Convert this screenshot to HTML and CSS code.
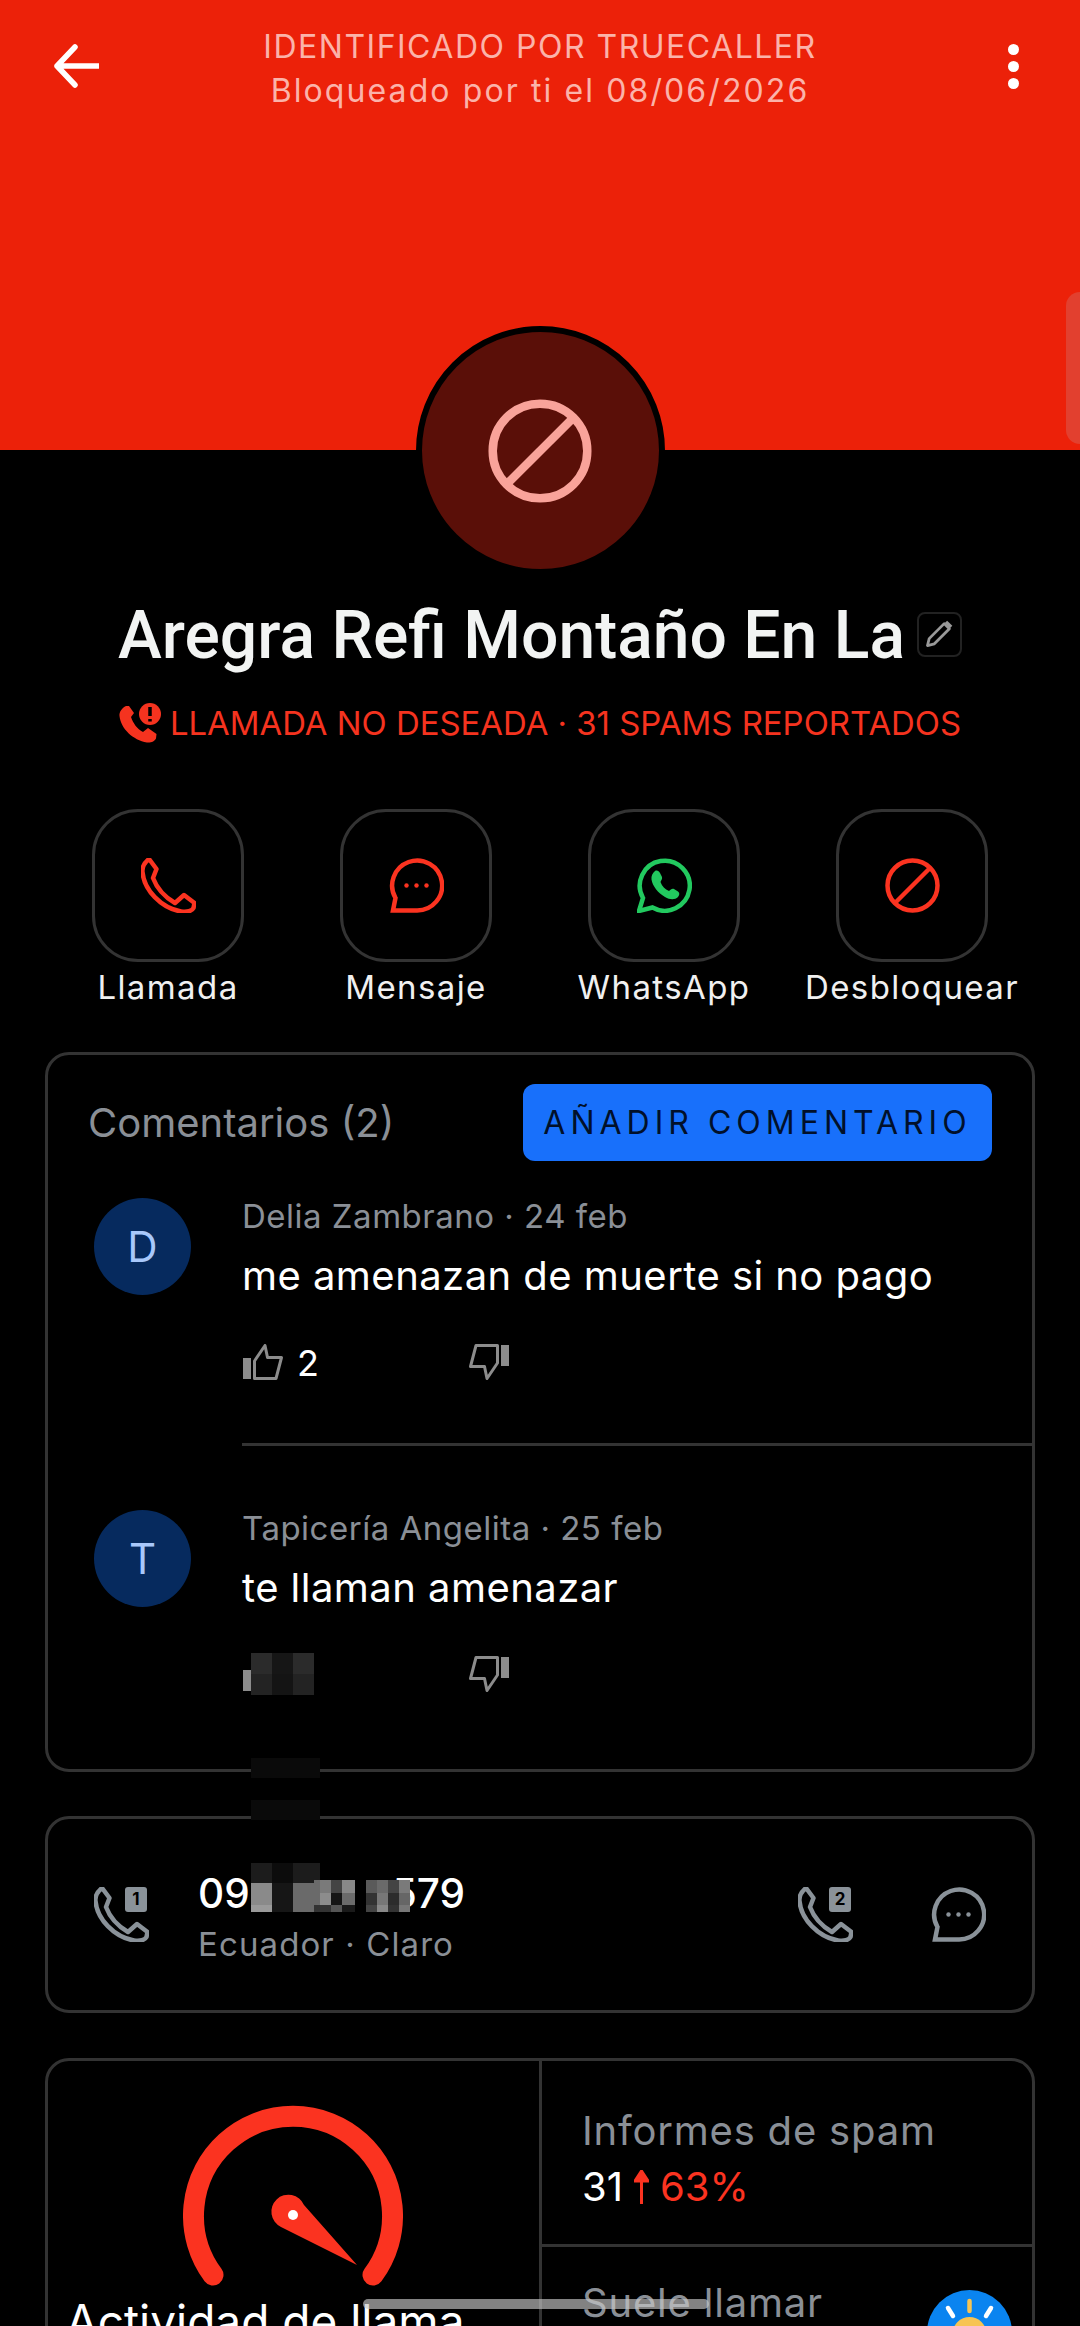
FILE: index.html
```html
<!DOCTYPE html>
<html lang="es">
<head>
  <meta charset="UTF-8" />
  <meta name="viewport" content="width=device-width, initial-scale=1" />
  <title>Truecaller</title>
  <link rel="stylesheet" href="styles.css">
</head>
<body>
  <svg class="defs" width="0" height="0">
    <symbol id="phone" viewBox="0 0 55 55">
      <path d="M8 1C3 5 1 9 1.500 14C3 32 20 50 40 53.500C46 54.500 51 53 52.500 50L53.500 45L43 37L34 45C22 38 15 28 12 20L15.500 11Z" fill="none" stroke="currentColor" stroke-width="4.500" stroke-linejoin="round"/>
    </symbol>
    <symbol id="bubble" viewBox="0 0 55 55">
      <path d="M4 52.500L6.500 40A25 25 0 1 1 28 52.500Z" fill="none" stroke="currentColor" stroke-width="4.500" stroke-linejoin="miter"/>
      <circle cx="17.500" cy="27.500" r="2.200" fill="currentColor"/>
      <circle cx="27.500" cy="27.500" r="2.200" fill="currentColor"/>
      <circle cx="37.500" cy="27.500" r="2.200" fill="currentColor"/>
    </symbol>
    <symbol id="ban" viewBox="0 0 55 55">
      <circle cx="27.500" cy="27.500" r="25" fill="none" stroke="currentColor" stroke-width="4.500"/>
      <path d="M45 10L10 45" stroke="currentColor" stroke-width="4.500"/>
    </symbol>
    <symbol id="thumb" viewBox="0 0 40 36">
      <rect x="0" y="14" width="8" height="21" fill="currentColor"/>
      <path d="M11.500 34.500V17L22 1.500L24.500 13.500H38.500L33 34.500Z" fill="none" stroke="currentColor" stroke-width="3" stroke-linejoin="round"/>
    </symbol>
  </svg>

  <header class="hero">
    <svg class="back" width="46" height="44" viewBox="0 0 46 44"><path d="M22 3L4 22L22 41M4 22H45" fill="none" stroke="#fff" stroke-width="5.500" stroke-linecap="round" stroke-linejoin="round"/></svg>
    <div class="hero-text">
      <div>IDENTIFICADO POR TRUECALLER</div>
      <div>Bloqueado por ti el 08/06/2026</div>
    </div>
    <div class="dots"><span></span><span></span><span></span></div>
    <div class="side-tab"></div>
  </header>

  <div class="avatar">
    <svg width="104" height="104"><use href="#ban"/></svg>
  </div>

  <div class="title-row">
    <h1>Aregra Refi Montaño En La</h1>
    <span class="edit">
      <svg width="30" height="30" viewBox="0 0 26 26"><path d="M3 23L4.500 17L17.500 4L22 8.500L9 21.500Z" fill="none" stroke="#999" stroke-width="2.400" stroke-linejoin="round"/><path d="M19 2.500L23.500 7" stroke="#999" stroke-width="3"/></svg>
    </span>
  </div>

  <div class="spam-row">
    <svg width="42" height="40" viewBox="0 0 42 40">
      <path d="M7 3C3 5 0 9 .5 13C2 26 14 37 28 39.500C32 40 36 38 37 35.500L37.500 31L29 25L24 29C18 26 14 20 12 14L15 10L10 3Z" fill="#f5331f"/>
      <circle cx="31" cy="11" r="11" fill="#f5331f"/>
      <path d="M31 4V13M31 16V18.500" stroke="#000" stroke-width="3.500"/>
    </svg>
    <span>LLAMADA NO DESEADA · 31 SPAMS REPORTADOS</span>
  </div>

  <div class="actions">
    <div class="action">
      <div class="action-box red"><svg width="55" height="55"><use href="#phone"/></svg></div>
      <div class="action-label">Llamada</div>
    </div>
    <div class="action">
      <div class="action-box red"><svg width="55" height="55"><use href="#bubble"/></svg></div>
      <div class="action-label">Mensaje</div>
    </div>
    <div class="action">
      <div class="action-box green">
        <svg width="55" height="55" viewBox="0 0 55 55">
          <path d="M2 53L6 40A25 25 0 1 1 15.500 49.500Z" fill="none" stroke="currentColor" stroke-width="4.500"/>
          <path d="M18 13C20 12 22 13 23 15L25 19C25.500 21 24 22.500 23.500 24C25 28 28 31.500 32 33C33.500 32 35 30 37 31L41 33.500C43 35 42.500 37 41 39C38 42 33 42 28 39C21 35 15.500 28 14.500 21.500C14 18 15.500 15 18 13Z" fill="currentColor"/>
        </svg>
      </div>
      <div class="action-label">WhatsApp</div>
    </div>
    <div class="action">
      <div class="action-box red"><svg width="55" height="55"><use href="#ban"/></svg></div>
      <div class="action-label">Desbloquear</div>
    </div>
  </div>

  <section class="card comments">
    <div class="comments-head">
      <span>Comentarios (2)</span>
      <button class="add-btn">AÑADIR COMENTARIO</button>
    </div>

    <div class="comment">
      <div class="comment-avatar">D</div>
      <div class="comment-body first">
        <div class="meta">Delia Zambrano · 24 feb</div>
        <div class="comment-text">me amenazan de muerte si no pago</div>
        <div class="reactions">
          <span class="like"><svg width="40" height="36"><use href="#thumb"/></svg><b>2</b></span>
          <svg class="dislike" width="40" height="36"><use href="#thumb"/></svg>
        </div>
      </div>
    </div>

    <div class="comment">
      <div class="comment-avatar">T</div>
      <div class="comment-body">
        <div class="meta">Tapicería Angelita · 25 feb</div>
        <div class="comment-text">te llaman amenazar</div>
        <div class="reactions">
          <span class="like"><svg width="40" height="36"><use href="#thumb"/></svg></span>
          <svg class="dislike" width="40" height="36"><use href="#thumb"/></svg>
        </div>
      </div>
    </div>
  </section>

  <section class="card number-card">
    <div class="sim">
      <svg width="55" height="55"><use href="#phone"/></svg>
      <span class="sim-tag">1</span>
    </div>
    <div class="number-info">
      <div class="number"><span>09</span><span class="number-gap"></span><span>579</span></div>
      <div class="meta">Ecuador · Claro</div>
    </div>
    <div class="sim second">
      <svg width="55" height="55"><use href="#phone"/></svg>
      <span class="sim-tag">2</span>
    </div>
    <svg class="sms" width="55" height="55"><use href="#bubble"/></svg>
  </section>

  <section class="card stats">
    <div class="gauge-col">
      <svg class="gauge" width="220" height="190" viewBox="0 0 220 190">
        <path d="M30 170A99.500 99.500 0 1 1 190 170" fill="none" stroke="#fb3320" stroke-width="21" stroke-linecap="round"/>
        <path d="M174 160L98 122A17 17 0 1 1 121 100Z" fill="#fb3320"/>
        <circle cx="110" cy="110" r="5" fill="#fff"/>
      </svg>
      <div class="gauge-label">Actividad de llama</div>
    </div>
    <div class="stats-col">
      <div class="stat">
        <div class="stat-title">Informes de spam</div>
        <div class="stat-value">31<svg width="15" height="34" viewBox="0 0 15 34"><path d="M7.500 34V4M1 11L7.500 1L14 11Z" fill="#fb3320" stroke="#fb3320" stroke-width="3"/></svg><span>63%</span></div>
      </div>
      <div class="stat when">
        <div class="stat-title">Suele llamar</div>
        <svg class="sun" width="85" height="85" viewBox="0 0 85 85">
          <circle cx="42.500" cy="42.500" r="42.500" fill="#0a84f0"/>
          <circle cx="42.500" cy="44" r="17" fill="#f7c453"/>
          <path d="M42.500 11V21" stroke="#f7c453" stroke-width="4.500" stroke-linecap="round"/>
          <path d="M21 18L26 26M64 18L59 26" stroke="#fff" stroke-width="4.500" stroke-linecap="round"/>
        </svg>
      </div>
    </div>
  </section>

  <!-- redaction mosaic from the original capture -->
  <svg class="mosaic" width="1080" height="2326" shape-rendering="crispEdges">
    <rect x="251" y="1653" width="21" height="21" fill="#2b2b2b"/>
    <rect x="272" y="1653" width="21" height="21" fill="#161616"/>
    <rect x="293" y="1653" width="21" height="21" fill="#2b2b2b"/>
    <rect x="251" y="1674" width="21" height="21" fill="#232323"/>
    <rect x="272" y="1674" width="21" height="21" fill="#141414"/>
    <rect x="293" y="1674" width="21" height="21" fill="#232323"/>
    <rect x="251" y="1758" width="69" height="20" fill="#0a0a0a"/>
    <rect x="251" y="1800" width="69" height="20" fill="#0a0a0a"/>
    <rect x="251" y="1863" width="21" height="20" fill="#1c1c1c"/>
    <rect x="272" y="1863" width="21" height="20" fill="#0c0c0c"/>
    <rect x="293" y="1863" width="27" height="20" fill="#1c1c1c"/>
    <rect x="251" y="1883" width="21" height="22" fill="#8a8a8a"/>
    <rect x="251" y="1905" width="21" height="7" fill="#9a9a9a"/>
    <rect x="272" y="1883" width="21" height="29" fill="#161616"/>
    <rect x="293" y="1883" width="21" height="29" fill="#6a6a6a"/>
    <rect x="314" y="1880" width="6" height="25" fill="#6a6a6a"/>
    <rect x="320" y="1880" width="11" height="13" fill="#7a7a7a"/>
    <rect x="331" y="1880" width="11" height="13" fill="#444"/>
    <rect x="342" y="1880" width="13" height="13" fill="#888"/>
    <rect x="320" y="1893" width="11" height="12" fill="#8c8c8c"/>
    <rect x="331" y="1893" width="11" height="12" fill="#151515"/>
    <rect x="342" y="1893" width="13" height="12" fill="#6b6b6b"/>
    <rect x="314" y="1905" width="17" height="7" fill="#333"/>
    <rect x="331" y="1905" width="11" height="7" fill="#555"/>
    <rect x="342" y="1905" width="13" height="7" fill="#1a1a1a"/>
    <rect x="366" y="1880" width="11" height="13" fill="#5a5a5a"/>
    <rect x="377" y="1880" width="11" height="13" fill="#6a6a6a"/>
    <rect x="388" y="1880" width="11" height="13" fill="#444"/>
    <rect x="399" y="1880" width="11" height="13" fill="#7a7a7a"/>
    <rect x="366" y="1893" width="11" height="12" fill="#333"/>
    <rect x="377" y="1893" width="11" height="12" fill="#777"/>
    <rect x="388" y="1893" width="11" height="12" fill="#2c2c2c"/>
    <rect x="399" y="1893" width="11" height="12" fill="#666"/>
    <rect x="366" y="1905" width="11" height="7" fill="#444"/>
    <rect x="377" y="1905" width="11" height="7" fill="#888"/>
    <rect x="388" y="1905" width="11" height="7" fill="#333"/>
    <rect x="399" y="1905" width="11" height="7" fill="#777"/>
  </svg>

  <div class="home-bar"></div>
</body>
</html>
```

FILE: styles.css
```css
* {
  box-sizing: border-box;
}
html, body {
  margin: 0;
  height: 2326px;
  overflow: hidden;
}
body {
  position: relative;
  width: 1080px;
  background: #000;
  color: #fff;
  font-family: Inter, 'Noto Sans', sans-serif;
}
.defs {
  position: absolute;
}

.hero {
  position: relative;
  height: 450px;
  padding-top: 25px;
  background: #ec2109;
}
.back {
  position: absolute;
  left: 53px;
  top: 44px;
}
.hero-text {
  font-size: 32px;
  line-height: 44px;
  letter-spacing: 1.5px;
  text-align: center;
  color: #fbb3aa;
}
.hero-text div + div {
  letter-spacing: 2.1px;
}
.dots {
  position: absolute;
  right: 61px;
  top: 44px;
  display: flex;
  flex-direction: column;
  gap: 6px;
}
.dots span {
  width: 11px;
  height: 11px;
  border-radius: 50%;
  background: #fff;
}
.side-tab {
  position: absolute;
  right: -14px;
  top: 292px;
  width: 28px;
  height: 152px;
  border-radius: 14px;
  background: #e2402f;
}

.avatar {
  display: flex;
  align-items: center;
  justify-content: center;
  width: 249px;
  height: 249px;
  margin: -124px auto 0;
  position: relative;
  border: 6px solid #000;
  border-radius: 50%;
  background: #5a0f08;
  color: #f9a39a;
}

.title-row {
  display: flex;
  align-items: center;
  justify-content: center;
  gap: 12px;
  height: 72px;
  margin-top: 25px;
}
h1 {
  margin: 0;
  font-family: Roboto, sans-serif;
  font-size: 66px;
  font-weight: 500;
  line-height: 72px;
  color: #f2f4f3;
}
.edit {
  display: flex;
  align-items: center;
  justify-content: center;
  width: 45px;
  height: 45px;
  margin-top: -4px;
  border: 2px solid #222;
  border-radius: 8px;
}

.spam-row {
  display: flex;
  align-items: center;
  justify-content: center;
  gap: 9px;
  height: 40px;
  margin-top: 31px;
  font-size: 32.900px;
  color: #f5331f;
}

.actions {
  display: flex;
  justify-content: space-between;
  margin: 66px 92px 0;
}
.action {
  position: relative;
  width: 152px;
}
.action-box {
  display: flex;
  align-items: center;
  justify-content: center;
  height: 153px;
  border: 3px solid #333;
  border-radius: 46px;
}
.red {
  color: #fb3320;
}
.green {
  color: #22c95f;
}
.action-label {
  display: flex;
  justify-content: center;
  margin-top: 5px;
  font-size: 33px;
  line-height: 40px;
  white-space: nowrap;
  letter-spacing: 1.400px;
  color: #f0f0f0;
}

.card {
  margin: 0 45px;
  border: 3px solid #333;
  border-radius: 24px;
}
.comments {
  height: 720px;
  margin-top: 45px;
  padding-top: 29px;
}
.comments-head {
  display: flex;
  align-items: center;
  justify-content: space-between;
  padding: 0 40px 0 40px;
  font-size: 40px;
  color: #8a8f96;
}
.add-btn {
  width: 469px;
  height: 77px;
  padding: 0;
  border: none;
  border-radius: 12px;
  background: #1870fb;
  color: #01102a;
  font-family: inherit;
  font-size: 32px;
  letter-spacing: 5px;
}
.comment {
  display: flex;
  gap: 51px;
  padding-left: 46px;
  margin-top: 37px;
}
.comment + .comment {
  margin-top: 64px;
}
.comment-avatar {
  display: flex;
  align-items: center;
  justify-content: center;
  flex: none;
  width: 97px;
  height: 97px;
  border-radius: 50%;
  background: #062a5e;
  color: #a8c8fb;
  font-size: 42px;
}
.comment-body {
  flex: 1;
}
.comment-body.first {
  padding-bottom: 63px;
  border-bottom: 3px solid #333;
}
.meta {
  margin-top: -1px;
  font-size: 33px;
  line-height: 38px;
  letter-spacing: .5px;
  color: #8a8f96;
}
.comment-text {
  margin-top: 17px;
  font-size: 40px;
  line-height: 48px;
  letter-spacing: .45px;
}
.reactions {
  display: flex;
  height: 38px;
  margin-top: 42px;
  color: #8c8c8c;
}
.like {
  display: flex;
  align-items: flex-end;
  gap: 14px;
  width: 227px;
  padding-left: 1px;
}
.like b {
  font-size: 36px;
  font-weight: 400;
  line-height: 34px;
  color: #fff;
}
.dislike {
  transform: rotate(180deg);
  margin-top: 2px;
}

.number-card {
  display: flex;
  align-items: center;
  height: 197px;
  margin-top: 44px;
  padding: 0 46px;
  color: #8a9299;
}
.number-card .meta {
  margin-top: 6px;
  letter-spacing: 1.100px;
}
.sim {
  position: relative;
  width: 55px;
  height: 55px;
}
.sim svg {
  display: block;
}
.sim-tag {
  position: absolute;
  right: 2px;
  top: 0;
  width: 22px;
  height: 25px;
  border-radius: 3px;
  background: #8a9299;
  color: #000;
  font-size: 17px;
  font-weight: 700;
  line-height: 25px;
  text-align: center;
}
.number-info {
  flex: 1;
  margin-left: 49px;
  padding-top: 2px;
}
.number {
  display: flex;
  font-size: 40.500px;
  font-weight: 500;
  line-height: 50px;
  color: #fff;
}
.number-gap {
  width: 142px;
}
.second {
  margin-right: 78px;
}

.stats {
  display: grid;
  grid-template-columns: 494px 1fr;
  height: 400px;
  margin-top: 45px;
}
.gauge-col {
  display: flex;
  flex-direction: column;
  align-items: center;
  padding: 44px 2px 0 0;
  border-right: 3px solid #333;
}
.gauge {
  flex: none;
}
.gauge-label {
  align-self: flex-start;
  margin: 1px 0 0 18px;
  font-size: 46px;
  line-height: 50px;
  white-space: nowrap;
}
.stat {
  height: 186px;
  padding: 46px 40px 0;
  border-bottom: 3px solid #333;
}
.stat-title {
  font-size: 40px;
  line-height: 48px;
  letter-spacing: .8px;
  color: #8a8f96;
}
.stat-value {
  display: flex;
  align-items: center;
  gap: 11px;
  margin-top: 10px;
  font-size: 40px;
  line-height: 44px;
}
.stat-value span {
  color: #fb3320;
}
.when {
  position: relative;
  border-bottom: none;
  padding-top: 32px;
}
.sun {
  position: absolute;
  right: 20px;
  top: 43px;
}

.mosaic {
  position: absolute;
  left: 0;
  top: 0;
  pointer-events: none;
}
.home-bar {
  position: absolute;
  left: 363px;
  top: 2299px;
  width: 346px;
  height: 10px;
  border-radius: 5px;
  background: rgba(200, 200, 200, .65);
}
```
